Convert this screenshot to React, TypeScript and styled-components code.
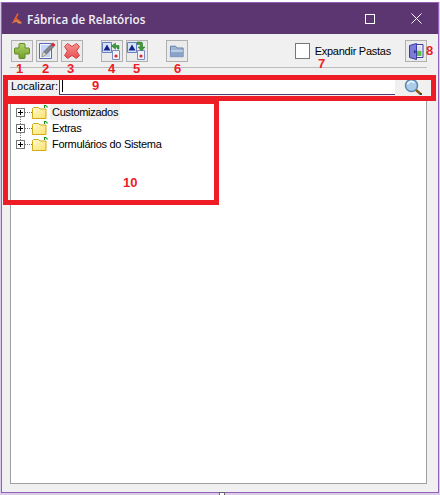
import styled, { createGlobalStyle } from "styled-components";

const GlobalStyle = createGlobalStyle`
  html, body {
    margin: 0;
    padding: 0;
    background: #ffffff;
  }
  #root {
    width: 440px;
    height: 495px;
  }
`;

// icons
const Plus = () => (
  <svg width="16" height="16" viewBox="0 0 16 16">
    <defs>
      <linearGradient id="plusFill" x1="0" y1="0" x2="0" y2="1">
        <stop offset="0" stopColor="#b4d46a" />
        <stop offset="1" stopColor="#6f9e2a" />
      </linearGradient>
    </defs>
    <path d="M5.500.5h5l.5.5v4h4l.5.5v5l-.5.5h-4v4l-.5.5h-5l-.5-.5v-4H1l-.5-.5v-5L1 5h4V1z" fill="url(#plusFill)" stroke="#5f8c24" />
  </svg>
);

const Pencil = () => (
  <svg width="18" height="18" viewBox="0 0 18 18">
    <path d="M1.500 1.500h12v15h-12z" fill="#eef3fd" stroke="#5a68b8" />
    <path d="M3 3h9v12H3z" fill="#c2d5f4" />
    <path d="M4 15l1.500-5L13 2.500 15.500 5 8 12.500z" fill="#84848c" stroke="#4c4c54" strokeWidth=".6" />
    <path d="M4 15l1.500-5L8 12.500z" fill="#e8d4a8" />
    <path d="M13 2.500L15 .5 17.500 3l-2 2z" fill="#d8262c" />
  </svg>
);

const Cross = () => (
  <svg width="18" height="18" viewBox="0 0 18 18">
    <defs>
      <linearGradient id="crossFill" x1="0" y1="0" x2="0" y2="1">
        <stop offset="0" stopColor="#f89090" />
        <stop offset="1" stopColor="#e85050" />
      </linearGradient>
    </defs>
    <path d="M4.500 1.500L9 4.500l4.500-3 3 3L13.500 9l3 4.500-3 3-4.500-3-4.500 3-3-3L4.500 9l-3-4.500z" fill="url(#crossFill)" stroke="#d04444" strokeLinejoin="round" />
  </svg>
);

const DocPair = ({ down }: { down?: boolean }) => (
  <svg width="20" height="20" viewBox="0 0 20 20">
    <path d="M.5 1.500h9v10h-9z" fill="#d6e4f8" stroke="#6a7fc0" />
    <path d="M5 3.500l3.500 6h-7z" fill="#14228c" />
    <path d="M10.500 9.500h7v9h-7z" fill="#eef3fb" stroke="#7a8cc0" />
    <circle cx="14" cy="15" r="1.600" fill="#e02828" />
    {down ? (
      <path d="M10 1h4.500l1 1v4H18l-3.500 4L11 6h2.200V3.500H10z" fill="#3c9a3c" stroke="#1f6e1f" strokeWidth=".5" />
    ) : (
      <path d="M17 8V4.500h-3.500V2L9.500 5l4 3.200V6.200h2V8z" fill="#3c9a3c" stroke="#1f6e1f" strokeWidth=".5" />
    )}
  </svg>
);

const OpenFolder = () => (
  <svg width="16" height="14" viewBox="0 0 18 16">
    <path d="M1.500 2.500h6l1.500 2h7v10h-14.500z" fill="#9fb4d4" stroke="#6079a4" />
    <path d="M2 8h14" stroke="#e4ecf8" />
    <path d="M1.500 9.500h14.500v5H1.500z" fill="#8aa2c8" />
  </svg>
);

const Door = () => (
  <svg width="15" height="17" viewBox="0 0 15 17">
    <path d="M6 1.500h8v13H6z" fill="#f4f4fa" stroke="#3c3ca0" />
    <path d="M8 7.500h4.500v5.500H8z" fill="#5ec04c" />
    <path d="M8 3h4.500v4.500H8z" fill="#dcdcf0" />
    <path d="M.5 2.500L7.500.5v16l-7-2z" fill="#7b7bd8" stroke="#3c3ca0" />
    <rect x="5" y="7.500" width="1.500" height="2.500" fill="#26267c" />
  </svg>
);

const Magnifier = () => (
  <svg width="20" height="18" viewBox="0 0 20 18">
    <circle cx="7.500" cy="7.500" r="6" fill="#a9cdea" stroke="#5a86ae" strokeWidth="1.500" />
    <path d="M3.500 6.500a4 4 0 0 1 7-1.500" fill="none" stroke="#f0f8ff" strokeWidth="1.500" />
    <path d="M12 12l4.500 4" stroke="#8c5a14" strokeWidth="2.500" />
    <circle cx="17" cy="16" r="1" fill="#1a1a1a" />
  </svg>
);

const Logo = () => (
  <svg width="11" height="13" viewBox="0 0 13 13">
    <path d="M7.500 0L9 1.500 6.500 6 12 10l1 2.500-6.500-4L1 12.500 4.500 6z" fill="#e8622c" />
    <path d="M1 12.500l5.500-4L13 12.500H9L6.500 10z" fill="#f0a040" />
  </svg>
);

const Folder = () => (
  <svg width="16" height="14" viewBox="0 0 16 14">
    <defs>
      <linearGradient id="folderFill" x1="0" y1="0" x2="1" y2="1">
        <stop offset="0" stopColor="#fffbd0" />
        <stop offset="1" stopColor="#fbe26a" />
      </linearGradient>
    </defs>
    <path d="M.5 3.500l1-1h5l1.500 1.500h6v9.500H.5z" fill="url(#folderFill)" stroke="#d2a916" />
    <path d="M12.500 3V.5h1.500M14 .5l1.500 2" fill="none" stroke="#14941e" strokeWidth="1.200" />
  </svg>
);

// data
const treeItems = [
  { id: 1, title: "Customizados", selected: true },
  { id: 2, title: "Extras", selected: false },
  { id: 3, title: "Formulários do Sistema", selected: false },
];

const marks = [
  { id: 1, text: "1", x: 16, y: 62 },
  { id: 2, text: "2", x: 42, y: 62 },
  { id: 3, text: "3", x: 67, y: 62 },
  { id: 4, text: "4", x: 108, y: 62 },
  { id: 5, text: "5", x: 133, y: 62 },
  { id: 6, text: "6", x: 174, y: 62 },
  { id: 7, text: "7", x: 318, y: 57 },
  { id: 8, text: "8", x: 426, y: 44 },
  { id: 9, text: "9", x: 92, y: 79 },
  { id: 10, text: "10", x: 123, y: 176 },
];

const App = () => {
  return (
    <Page>
      <GlobalStyle />
      <Frame>
        <TitleBar>
          <Logo />
          <Title>Fábrica de Relatórios</Title>
          <MaxButton />
          <CloseButton>
            <svg width="11" height="11" viewBox="0 0 11 11">
              <path d="M.5.5l10 10M10.500.5l-10 10" stroke="#ffffff" strokeWidth="1" />
            </svg>
          </CloseButton>
        </TitleBar>
        <Content>
          <Toolbar>
            <ToolGroup>
              <ToolButton><Plus /></ToolButton>
              <ToolButton><Pencil /></ToolButton>
              <ToolButton><Cross /></ToolButton>
            </ToolGroup>
            <ToolGroup>
              <ToolButton><DocPair /></ToolButton>
              <ToolButton><DocPair down /></ToolButton>
            </ToolGroup>
            <ToolGroup>
              <ToolButton><OpenFolder /></ToolButton>
            </ToolGroup>
            <Expand>
              <CheckBox />
              <span>Expandir Pastas</span>
            </Expand>
            <ToolButton><Door /></ToolButton>
          </Toolbar>
          <Separator />
          <SearchRow>
            <SearchLabel>Localizar:</SearchLabel>
            <SearchInput><Caret /></SearchInput>
            <SearchButton><Magnifier /></SearchButton>
          </SearchRow>
          <TreePanel>
            {treeItems.map((item, index) => (
              <TreeRow key={item.id}>
                <Expander $last={index === treeItems.length - 1}>
                  <svg width="7" height="7" viewBox="0 0 7 7">
                    <path d="M1 3.500h5M3.500 1v5" stroke="#000000" />
                  </svg>
                </Expander>
                <Dots />
                <Folder />
                <TreeLabel $selected={item.selected}>{item.title}</TreeLabel>
              </TreeRow>
            ))}
          </TreePanel>
        </Content>
      </Frame>

      {/* red annotations drawn over the window */}
      <SearchHighlight />
      <TreeHighlight />
      {marks.map((mark) => (
        <Mark key={mark.id} style={{ left: mark.x, top: mark.y }}>{mark.text}</Mark>
      ))}
      <Grip />
    </Page>
  );
};

const Page = styled.div`
  position: relative;
  width: 440px;
  height: 495px;
  overflow: hidden;
  background: linear-gradient(#ffffff 2px, #d8cce8 2px);
  font-family: "Liberation Sans", Arial, sans-serif;
  padding: 2px 1px 2px 1px;
  box-sizing: border-box;
`;

const Frame = styled.div`
  width: 438px;
  height: 491px;
  box-sizing: border-box;
  border: 1px solid #9560b8;
  background: #f0f0f0;
  display: flex;
  flex-direction: column;
`;

const TitleBar = styled.div`
  height: 31px;
  flex: none;
  background: #5c3670;
  display: flex;
  align-items: center;
  padding: 0 16px 0 9px;
  color: #ffffff;
`;

const Title = styled.span`
  margin-left: 5px;
  flex: 1;
  font-family: "Open Sans", sans-serif;
  font-size: 11.7px;
  font-weight: 600;
  color: #f2f0f6;
`;

const MaxButton = styled.div`
  width: 8px;
  height: 8px;
  border: 1px solid #ffffff;
  margin-right: 36px;
`;

const CloseButton = styled.div`
  width: 11px;
  height: 11px;
  display: flex;
`;

const Content = styled.div`
  flex: 1;
  display: flex;
  flex-direction: column;
  padding: 0 11px 8px 8px;
  min-height: 0;
`;

const Toolbar = styled.div`
  display: flex;
  align-items: center;
  height: 22px;
  margin: 6px 0 0 1px;
`;

const ToolGroup = styled.div`
  display: flex;
  gap: 3px;
  margin-right: 18px;
`;

const ToolButton = styled.div`
  width: 22px;
  height: 22px;
  box-sizing: border-box;
  border: 1px solid #b0b0b0;
  background: #ebebeb;
  display: flex;
  align-items: center;
  justify-content: center;
`;

const Expand = styled.label`
  margin-left: auto;
  margin-right: 14px;
  display: flex;
  align-items: center;
  gap: 5px;
  font-size: 11px;
  letter-spacing: -0.25px;
  color: #000000;
`;

const CheckBox = styled.span`
  width: 13px;
  height: 14px;
  border: 1px solid #777777;
  background: #ffffff;
`;

const Separator = styled.div`
  height: 1px;
  background: #bcbcbc;
  margin: 5px 0 0 0;
`;

const SearchRow = styled.div`
  display: flex;
  align-items: center;
  height: 18px;
  margin-top: 9px;
`;

const SearchLabel = styled.span`
  width: 48px;
  font-size: 11px;
  padding-left: 1px;
  color: #000000;
`;

const SearchInput = styled.div`
  width: 336px;
  height: 17px;
  box-sizing: border-box;
  background: #ffffff;
  border-left: 1px solid #5c3670;
  border-bottom: 1px solid #5c3670;
  padding: 2px 0 0 2px;
`;

const Caret = styled.div`
  width: 1px;
  height: 12px;
  background: #000000;
`;

const SearchButton = styled.div`
  flex: 1;
  display: flex;
  justify-content: center;
  padding: 2px 0 0 5px;
`;

const TreePanel = styled.div`
  flex: 1;
  border: 1px solid #a0a0a0;
  background: #ffffff;
  margin: 4px 0 0 0;
  padding: 4px 0 0 5px;
`;

const TreeRow = styled.div`
  display: flex;
  align-items: center;
  height: 16px;
`;

const Expander = styled.div<{ $last?: boolean }>`
  position: relative;
  width: 9px;
  height: 9px;
  box-sizing: border-box;
  border: 1px solid #777777;
  background: #ffffff;
  display: flex;
  align-items: center;
  justify-content: center;

  svg {
    flex: none;
  }

  &::after {
    content: "";
    display: ${({ $last }) => ($last ? "none" : "block")};
    position: absolute;
    left: 3px;
    top: 8px;
    height: 7px;
    border-left: 1px dotted #777777;
  }
`;

const Dots = styled.div`
  width: 7px;
  border-top: 1px dotted #777777;
`;

const TreeLabel = styled.span<{ $selected?: boolean }>`
  margin-left: 2px;
  padding: 0 2px;
  line-height: 16px;
  font-size: 11px;
  letter-spacing: -0.3px;
  color: #000000;
  background: ${({ $selected }) => ($selected ? "#f0f0f0" : "transparent")};
`;

const SearchHighlight = styled.div`
  position: absolute;
  left: 3px;
  top: 75px;
  width: 433px;
  height: 26px;
  box-sizing: border-box;
  border: 5px solid #ee1c25;
`;

const TreeHighlight = styled.div`
  position: absolute;
  left: 3px;
  top: 99px;
  width: 216px;
  height: 106px;
  box-sizing: border-box;
  border: 5px solid #ee1c25;
`;

const Mark = styled.span`
  position: absolute;
  font-size: 13px;
  line-height: 13px;
  font-weight: 700;
  color: #ee1c25;
`;

const Grip = styled.div`
  position: absolute;
  left: 219px;
  bottom: 0;
  width: 4px;
  height: 2px;
  border: 1px solid #666666;
  border-bottom: 0;
  background: #ffffff;
`;

export default App;
